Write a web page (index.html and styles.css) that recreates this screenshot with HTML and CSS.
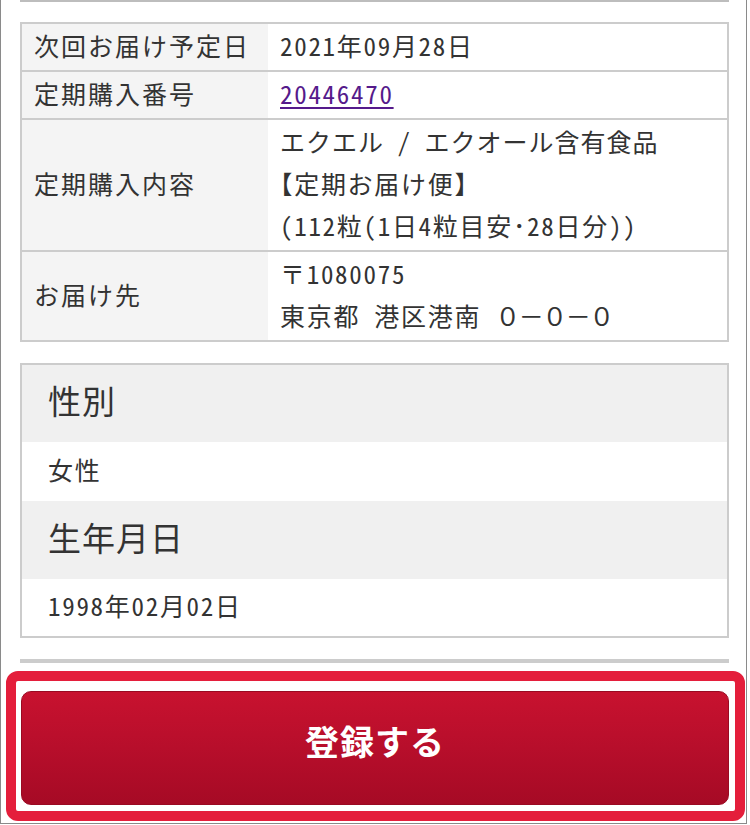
FILE: index.html
```html
<!DOCTYPE html>
<html lang="ja">
<head>
<meta charset="utf-8">
<title>定期購入 登録確認</title>
<link rel="stylesheet" href="styles.css">
</head>
<body>
<div class="frame">
  <div class="cut-line"></div>
  <table class="info">
    <tr>
      <th>次回お届け予定日</th>
      <td>2021年09月28日</td>
    </tr>
    <tr>
      <th>定期購入番号</th>
      <td><a href="#" class="num-link">20446470</a></td>
    </tr>
    <tr>
      <th>定期購入内容</th>
      <td><span class="narrow">エクエル / エクオール含有食品</span><br><span class="halt">【</span>定期お届け便<span class="halt">】</span><br>(112粒(1日4粒目安･28日分))</td>
    </tr>
    <tr>
      <th>お届け先</th>
      <td>〒1080075<br>東京都 港区港南 <span class="fullnum">０－０－０</span></td>
    </tr>
  </table>

  <div class="profile">
    <div class="p-head">性別</div>
    <div class="p-value">女性</div>
    <div class="p-head">生年月日</div>
    <div class="p-value">1998年02月02日</div>
  </div>

  <div class="divider"></div>

  <div class="highlight">
    <button class="submit" type="button">登録する</button>
  </div>
</div>
</body>
</html>
```

FILE: styles.css
```css
html, body {
  margin: 0;
  padding: 0;
  background: #fff;
}

body {
  width: 750px;
  font-family: "Noto Sans CJK JP", "Noto Sans", sans-serif;
  color: #333;
}

.frame {
  box-sizing: border-box;
  width: 747px;
  height: 824px;
  border-left: 1px solid #8a8a8a;
  border-right: 1px solid #8a8a8a;
  border-bottom: 1px solid #8a8a8a;
  padding: 0 17px 0 19px;
  overflow: hidden;
}

.cut-line {
  height: 2px;
  background: #bdbdbd;
}

.info {
  width: 100%;
  margin-top: 20px;
  border-collapse: collapse;
  border: 2px solid #cccccc;
  font-size: 25px;
  letter-spacing: 1.7px;
  font-feature-settings: "hwid" 1;
}

.info th,
.info td {
  border-top: 2px solid #cccccc;
  border-bottom: 2px solid #cccccc;
  padding: 0 12px 4px;
  line-height: 42px;
  text-align: left;
  vertical-align: middle;
  font-weight: normal;
}

.info th {
  width: 222px;
  background: #f4f4f4;
  letter-spacing: 2px;
}

.info td {
  background: #fff;
}

.narrow {
  letter-spacing: 1px;
}

.halt {
  font-feature-settings: "halt" 1;
}

.fullnum {
  font-feature-settings: normal;
  letter-spacing: -1.5px;
}

.num-link {
  color: #551a8b;
  text-decoration: underline;
  text-underline-offset: 3px;
}

.profile {
  margin-top: 21px;
  border: 2px solid #cccccc;
}

.p-head {
  box-sizing: border-box;
  height: 77px;
  display: flex;
  align-items: center;
  padding: 0 0 7px 26px;
  background: #f0f0f0;
  font-size: 33px;
  letter-spacing: 1px;
}

.p-head + .p-value + .p-head {
  height: 78px;
}

.p-value {
  box-sizing: border-box;
  height: 59px;
  display: flex;
  align-items: center;
  padding: 0 0 5px 26px;
  background: #fff;
  font-size: 25px;
  letter-spacing: 1.7px;
  font-feature-settings: "hwid" 1;
}

.p-value:last-child {
  height: 57px;
}

.divider {
  height: 4px;
  margin-top: 21px;
  background: #cccccc;
}

.highlight {
  margin: 8px -16px 0 -14px;
  border: 10px solid #e41e3b;
  border-radius: 12px;
  padding: 10px 6px 6px 5px;
  background: #fff;
}

.submit {
  display: block;
  box-sizing: border-box;
  width: 100%;
  height: 114px;
  border: 1px solid #9a0a22;
  border-radius: 10px;
  background: linear-gradient(to bottom, #c8122f 0%, #b70e2b 50%, #a60a25 100%);
  color: #fff;
  font-family: "Noto Sans CJK JP", "Noto Sans", sans-serif;
  font-size: 34px;
  font-weight: bold;
  letter-spacing: 1px;
  padding: 0 0 15px 0;
  cursor: pointer;
}
```
